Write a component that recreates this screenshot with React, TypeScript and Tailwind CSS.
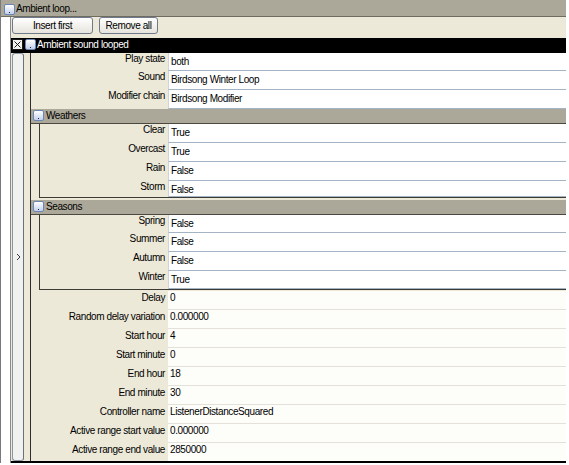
import React from "react"

type Prop = { label: string; value: string; h: string }

const general: Prop[] = [
  { label: "Play state", value: "both", h: "h-[18px]" },
  { label: "Sound", value: "Birdsong Winter Loop", h: "h-[19px]" },
  { label: "Modifier chain", value: "Birdsong Modifier", h: "h-[19px]" },
]

const weathers: Prop[] = [
  { label: "Clear", value: "True", h: "h-[19px]" },
  { label: "Overcast", value: "True", h: "h-[19px]" },
  { label: "Rain", value: "False", h: "h-[19px]" },
  { label: "Storm", value: "False", h: "h-[16px]" },
]

const seasons: Prop[] = [
  { label: "Spring", value: "False", h: "h-[18px]" },
  { label: "Summer", value: "False", h: "h-[19px]" },
  { label: "Autumn", value: "False", h: "h-[19px]" },
  { label: "Winter", value: "True", h: "h-[18px]" },
]

const timing: Prop[] = [
  { label: "Delay", value: "0", h: "h-[19px]" },
  { label: "Random delay variation", value: "0.000000", h: "h-[19px]" },
  { label: "Start hour", value: "4", h: "h-[19px]" },
  { label: "Start minute", value: "0", h: "h-[19px]" },
  { label: "End hour", value: "18", h: "h-[19px]" },
  { label: "End minute", value: "30", h: "h-[19px]" },
  { label: "Controller name", value: "ListenerDistanceSquared", h: "h-[19px]" },
  { label: "Active range start value", value: "0.000000", h: "h-[19px]" },
  { label: "Active range end value", value: "2850000", h: "h-[18px]" },
]

// little collapse button with the dot at the bottom
const Toggle = () => (
  <span className="relative block w-[11px] h-[11px] shrink-0 rounded-[2px] border border-[#6a86b4] bg-linear-to-b from-white to-[#c3d0ec]">
    <span className="absolute left-[4px] bottom-[1px] w-[1px] h-[1px] bg-[#1a2440]" />
  </span>
)

const RemoveBox = () => (
  <svg width="11" height="11" viewBox="0 0 11 11" className="shrink-0">
    <rect x="0.5" y="0.5" width="10" height="10" fill="#f2f2f0" stroke="#1a1a1a" />
    <path d="M2.5 2.5 L8.5 8.5 M8.5 2.5 L2.5 8.5" stroke="#1a1a1a" strokeWidth="1" />
  </svg>
)

const XpButton = ({ text, w }: { text: string; w: string }) => (
  <button
    className={`${w} h-[17px] rounded-[3px] border border-[#6f7b8d] bg-linear-to-b from-white to-[#e6e4dc] text-center leading-[15px]`}
  >
    {text}
  </button>
)

// text box style value cell
const BoxField = ({ p, labelW }: { p: Prop; labelW: string }) => (
  <div className={`flex ${p.h}`}>
    <div className={`${labelW} shrink-0 text-right pr-[3px]`}>{p.label}</div>
    <div className="flex-1 bg-white border-l border-b border-l-[#cdd4dd] border-b-[#a5b4c5] pl-[2px] pt-[3px] whitespace-nowrap">
      {p.value}
    </div>
  </div>
)

const PlainField = ({ p, last }: { p: Prop; last: boolean }) => (
  <div className={`flex ${p.h}`}>
    <div className="w-[137px] shrink-0 text-right pr-[3px] pt-[1px] whitespace-nowrap">{p.label}</div>
    <div
      className={`flex-1 bg-[#fdfdfa] pl-[2px] pt-[1px] whitespace-nowrap ${last ? "" : "border-b border-[#e4e2d8]"}`}
    >
      {p.value}
    </div>
  </div>
)

const Group = ({ title, items }: { title: string; items: Prop[] }) => (
  <div>
    <div className="h-[15px] bg-[#aca899] border-b border-[#4a4840] flex items-start pt-[1px] pl-[2px]">
      <Toggle />
      <span className="ml-[2px] leading-[12px]">{title}</span>
    </div>
    <div className="ml-[8px] border-l border-b border-[#3c3b36]">
      {items.map((p) => (
        <BoxField key={p.label} p={p} labelW="w-[128px]" />
      ))}
    </div>
  </div>
)

export default function App() {
  return (
    <div className="w-[569px] h-[465px] bg-white overflow-hidden font-['Liberation_Sans',Arial,sans-serif] text-[10px] leading-[12px] tracking-[-0.4px] text-black">
      <div className="w-[566px] border-l border-[#7a7a7a]">
        <div className="h-[17px] bg-[#aca899] border-b border-[#6e6c60] flex items-start pt-[4px] pl-[3px]">
          <Toggle />
          <span className="ml-[1px] -mt-[1px]">Ambient loop...</span>
        </div>

        <div className="ml-[9px] border-l border-[#8a8a8a] bg-[#ece9d8]">
          <div className="h-[21px] flex items-start gap-[6px] pl-[1px]">
            <XpButton text="Insert first" w="w-[81px]" />
            <XpButton text="Remove all" w="w-[59px]" />
          </div>

          <div className="h-[15px] bg-black text-white flex items-start pt-[1px] pl-[1px]">
            <RemoveBox />
            <span className="ml-[2px]">
              <Toggle />
            </span>
            <span className="ml-[1px]">Ambient sound looped</span>
          </div>

          <div className="flex border-b-2 border-black">
            <div className="w-[19px] shrink-0 pl-[1px]">
              <div className="h-full w-[12px] rounded-[3px] border border-[#8c96a3] border-r-[#67727f] bg-[#f1f2f0] flex items-center justify-center text-[#404040]">
                <svg width="5" height="8" viewBox="0 0 5 8">
                  <path d="M1 1 L4 4 L1 7" fill="none" stroke="#3a3a3a" strokeWidth="1" />
                </svg>
              </div>
            </div>

            <div className="flex-1 border-l border-[#2e2e2e]">
              {general.map((p) => (
                <BoxField key={p.label} p={p} labelW="w-[137px]" />
              ))}
              <Group title="Weathers" items={weathers} />
              <div className="h-[2px]" />
              <Group title="Seasons" items={seasons} />
              <div className="h-[1px]" />
              {timing.map((p, i) => (
                <PlainField key={p.label} p={p} last={i === timing.length - 1} />
              ))}
            </div>
          </div>
        </div>
      </div>
    </div>
  )
}
